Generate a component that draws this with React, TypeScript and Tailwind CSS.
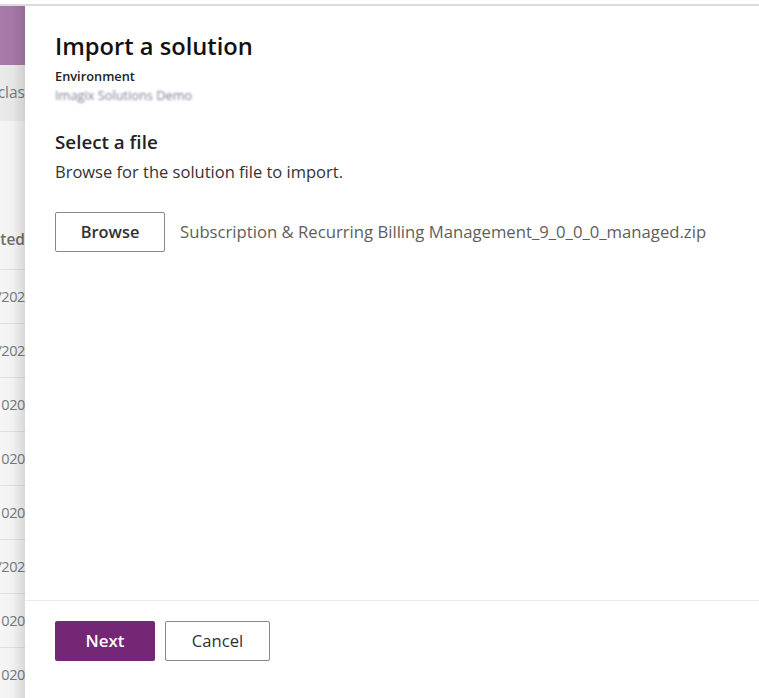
const rows = ["/202", "/202", "020", "020", "020", "/202", "020", "020"];

function BackPage() {
  return (
    <div className="relative w-[25px] shrink-0 overflow-hidden bg-[#f6f6f6] text-[#7a7a7a]">
      <div className="h-[59px] bg-[#a87aaa]" />
      <div className="flex h-[56px] items-center justify-end bg-[#ebebeb] text-[15.5px]">
        <span className="whitespace-nowrap pl-[1px]">clas</span>
      </div>
      <div className="h-[93px]" />
      <div className="flex h-[56px] items-center justify-end border-b border-[#e2e2e2] pb-[4px] text-[15.5px] font-semibold text-[#6f6f6f]">
        <span className="whitespace-nowrap">ted</span>
      </div>
      {rows.map((r, i) => (
        <div
          key={i}
          className="flex h-[54px] items-center justify-end border-b border-[#e2e2e2] text-[14.5px] tracking-[-0.4px]">
          <span className="whitespace-nowrap">{r}</span>
        </div>
      ))}
      <div className="pointer-events-none absolute inset-0 bg-gradient-to-r from-transparent via-black/[0.02] to-black/[0.12]" />
    </div>
  );
}

export default function App() {
  return (
    <div
      className="flex h-[698px] w-[759px] flex-col overflow-hidden bg-white"
      style={{ fontFamily: '"Open Sans", "Noto Sans", sans-serif' }}>
      <div className="h-[4px] bg-white" />
      <div className="h-[2px] bg-[#dcdcdc]" />
      <div className="flex min-h-0 flex-1">
        <BackPage />
        <div className="flex flex-1 flex-col bg-white">
          <div className="flex-1 px-[30px]">
            <h1 className="mt-[25px] text-[23.7px] leading-[30px] font-semibold text-[#111]">
              Import a solution
            </h1>
            <p className="mt-[7px] text-[12.8px] leading-[16px] font-semibold text-[#222]">
              Environment
            </p>
            <p className="mt-[3px] text-[12.8px] leading-[16px] text-[#7d8298] blur-[1.2px]">
              Imagix Solutions Demo
            </p>
            <h2 className="mt-[27px] text-[18.8px] leading-[24px] font-semibold text-[#222]">
              Select a file
            </h2>
            <p className="mt-[7px] text-[16.5px] leading-[22px] text-[#333]">
              Browse for the solution file to import.
            </p>
            <div className="mt-[29px] flex items-center gap-[15px]">
              <button className="h-[40px] w-[110px] rounded-[2px] border border-[#8a8886] text-[16.4px] font-semibold text-[#323130]">
                Browse
              </button>
              <span className="text-[16.7px] text-[#605e5c]">
                Subscription &amp; Recurring Billing Management_9_0_0_0_managed.zip
              </span>
            </div>
          </div>
          <div className="flex h-[98px] shrink-0 gap-[10px] border-t border-[#edebe9] px-[30px] pt-[20px]">
            <button className="h-[40px] w-[100px] rounded-[2px] bg-[#742774] text-[16.9px] font-semibold text-white">
              Next
            </button>
            <button className="h-[40px] w-[105px] rounded-[2px] border border-[#8a8886] text-[16.6px] text-[#323130]">
              Cancel
            </button>
          </div>
        </div>
      </div>
    </div>
  );
}
